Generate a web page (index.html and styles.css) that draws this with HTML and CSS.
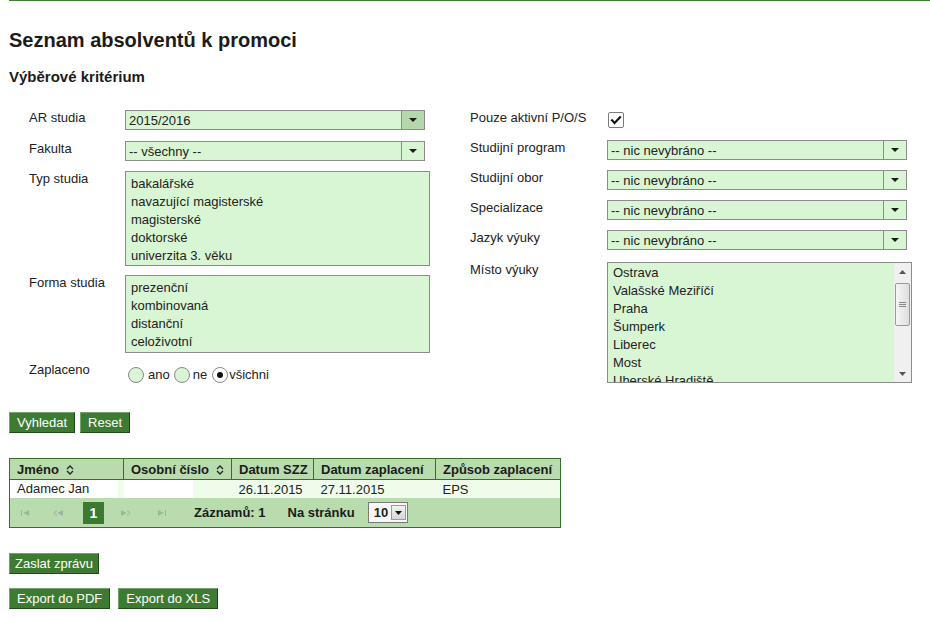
FILE: index.html
```html
<!DOCTYPE html>
<html lang="cs">
<head>
<meta charset="utf-8">
<title>Seznam absolventů k promoci</title>
<link rel="stylesheet" href="styles.css">
</head>
<body>
<div class="topline"></div>
<main class="page">
  <h1 class="title">Seznam absolventů k promoci</h1>
  <h2 class="subtitle">Výběrové kritérium</h2>

  <div class="criteria">
    <div class="col col-left">
      <div class="row">
        <span class="lbl">AR studia</span>
        <div class="select active"><span class="val">2015/2016</span><span class="arrow"></span></div>
      </div>
      <div class="row row-faculty">
        <span class="lbl">Fakulta</span>
        <div class="select"><span class="val">-- všechny --</span><span class="arrow"></span></div>
      </div>
      <div class="row">
        <span class="lbl">Typ studia</span>
        <div class="listbox lb-type">
          <div class="opt">bakalářské</div>
          <div class="opt">navazující magisterské</div>
          <div class="opt">magisterské</div>
          <div class="opt">doktorské</div>
          <div class="opt">univerzita 3. věku</div>
        </div>
      </div>
      <div class="row row-form">
        <span class="lbl">Forma studia</span>
        <div class="listbox lb-form">
          <div class="opt">prezenční</div>
          <div class="opt">kombinovaná</div>
          <div class="opt">distanční</div>
          <div class="opt">celoživotní</div>
        </div>
      </div>
      <div class="row row-paid">
        <span class="lbl">Zaplaceno</span>
        <div class="radios">
          <span class="radio r1"></span><span class="rtext t1">ano</span>
          <span class="radio r2"></span><span class="rtext t2">ne</span>
          <span class="radio r3 checked"></span><span class="rtext t3">všichni</span>
        </div>
      </div>
    </div>

    <div class="col col-right">
      <div class="row row-check">
        <span class="lbl">Pouze aktivní P/O/S</span>
        <span class="checkbox">
          <svg width="14" height="14" viewBox="0 0 14 14"><path d="M3 7.3 L5.6 10 L11 4.2" fill="none" stroke="#111" stroke-width="2.1" stroke-linecap="square"/></svg>
        </span>
      </div>
      <div class="row">
        <span class="lbl">Studijní program</span>
        <div class="select"><span class="val">-- nic nevybráno --</span><span class="arrow"></span></div>
      </div>
      <div class="row">
        <span class="lbl">Studijní obor</span>
        <div class="select"><span class="val">-- nic nevybráno --</span><span class="arrow"></span></div>
      </div>
      <div class="row">
        <span class="lbl">Specializace</span>
        <div class="select"><span class="val">-- nic nevybráno --</span><span class="arrow"></span></div>
      </div>
      <div class="row">
        <span class="lbl">Jazyk výuky</span>
        <div class="select"><span class="val">-- nic nevybráno --</span><span class="arrow"></span></div>
      </div>
      <div class="row row-place">
        <span class="lbl">Místo výuky</span>
        <div class="listbox scrolling">
          <div class="opts">
            <div class="opt">Ostrava</div>
            <div class="opt">Valašské Meziříčí</div>
            <div class="opt">Praha</div>
            <div class="opt">Šumperk</div>
            <div class="opt">Liberec</div>
            <div class="opt">Most</div>
            <div class="opt">Uherské Hradiště</div>
          </div>
          <div class="scrollbar">
            <span class="sb-btn"><svg width="7" height="4" viewBox="0 0 7 4"><path d="M0 4 L3.5 0 L7 4 Z" fill="#555"/></svg></span>
            <div class="sb-track">
              <div class="sb-thumb"><span class="grip"></span><span class="grip"></span><span class="grip"></span></div>
            </div>
            <span class="sb-btn"><svg width="7" height="4" viewBox="0 0 7 4"><path d="M0 0 L3.5 4 L7 0 Z" fill="#555"/></svg></span>
          </div>
        </div>
      </div>
    </div>
  </div>

  <div class="actions search-actions">
    <button class="btn">Vyhledat</button>
    <button class="btn">Reset</button>
  </div>

  <table class="grid">
    <colgroup>
      <col class="c1"><col class="c2"><col class="c3"><col class="c4"><col class="c5">
    </colgroup>
    <thead>
      <tr>
        <th>Jméno<svg class="sort" width="8" height="10" viewBox="0 0 8 10"><path d="M1 4 L4 1 L7 4 M1 6 L4 9 L7 6" fill="none" stroke="#222" stroke-width="1.3"/></svg></th>
        <th>Osobní číslo<svg class="sort" width="8" height="10" viewBox="0 0 8 10"><path d="M1 4 L4 1 L7 4 M1 6 L4 9 L7 6" fill="none" stroke="#222" stroke-width="1.3"/></svg></th>
        <th>Datum SZZ</th>
        <th>Datum zaplacení</th>
        <th>Způsob zaplacení</th>
      </tr>
    </thead>
    <tbody>
      <tr class="data">
        <td><div class="cell-white w1">Adamec Jan</div></td>
        <td><div class="cell-white w2"></div></td>
        <td class="txt">26.11.2015</td>
        <td class="txt">27.11.2015</td>
        <td class="txt">EPS</td>
      </tr>
      <tr class="pager-row">
        <td colspan="5">
          <div class="pager">
            <svg class="pg pg-first" width="8" height="6" viewBox="0 0 8 6"><path d="M0.5 0 V6" stroke="#9db39a" stroke-width="1"/><path d="M8 0 L2.5 3 L8 6 Z" fill="#9db39a"/></svg>
            <svg class="pg pg-prev" width="10" height="6" viewBox="0 0 10 6"><path d="M4 0.5 L0.8 3 L4 5.5" fill="none" stroke="#9db39a" stroke-width="1"/><path d="M10 0 L4.5 3 L10 6 Z" fill="#9db39a"/></svg>
            <span class="pg-cur">1</span>
            <svg class="pg pg-next" width="10" height="6" viewBox="0 0 10 6"><path d="M0 0 L5.5 3 L0 6 Z" fill="#9db39a"/><path d="M6 0.5 L9.2 3 L6 5.5" fill="none" stroke="#9db39a" stroke-width="1"/></svg>
            <svg class="pg pg-last" width="8" height="6" viewBox="0 0 8 6"><path d="M0 0 L5.5 3 L0 6 Z" fill="#9db39a"/><path d="M7.5 0 V6" stroke="#9db39a" stroke-width="1"/></svg>
            <span class="pg-text pg-count">Záznamů: 1</span>
            <span class="pg-text pg-per">Na stránku</span>
            <span class="mini-select"><span class="ms-val">10</span><span class="ms-btn"><svg width="7" height="4" viewBox="0 0 7 4"><path d="M0 0 L3.5 4 L7 0 Z" fill="#111"/></svg></span></span>
          </div>
        </td>
      </tr>
    </tbody>
  </table>

  <div class="actions msg-actions">
    <button class="btn btn-narrow">Zaslat zprávu</button>
  </div>
  <div class="actions export-actions">
    <button class="btn">Export do PDF</button>
    <button class="btn">Export do XLS</button>
  </div>
</main>
</body>
</html>
```

FILE: styles.css
```css
* { box-sizing: border-box; }
html, body { margin: 0; padding: 0; }
body {
  font-family: "Liberation Sans", Arial, sans-serif;
  font-size: 13px;
  color: #222;
  background: #fff;
  width: 930px;
  height: 622px;
  overflow: hidden;
}
.topline { height: 1px; margin-left: 9px; background: #3c7d2f; }
.page { padding-left: 9px; }

.title {
  margin: 27px 0 0;
  font-size: 20px;
  line-height: 24px;
  font-weight: bold;
  color: #1b1b1b;
}
.subtitle {
  margin: 16px 0 0;
  font-size: 15px;
  line-height: 18px;
  font-weight: bold;
  color: #1b1b1b;
}

.criteria { display: flex; margin-top: 24px; padding-left: 20px; }
.col { display: flex; flex-direction: column; gap: 10px; }
.col-left { width: 441px; }
.row { display: flex; align-items: flex-start; line-height: 16px; }
.col-left .lbl { width: 96px; flex: none; }
.col-right .lbl { width: 137px; flex: none; }
.row-faculty { margin-top: 1px; }
.row-form { margin-top: -1px; }
.row-paid { margin-top: -1px; }
.row-check { height: 20px; }
.row-place { margin-top: 2px; }

.select {
  width: 300px;
  height: 20px;
  border: 1px solid #8c8c8c;
  background: #d9f6d4;
  display: flex;
}
.select .val { flex: 1; padding: 1px 0 0 3px; line-height: 17px; white-space: nowrap; }
.select .arrow {
  width: 23px;
  border-left: 1px solid #8c8c8c;
  display: flex;
  align-items: center;
  justify-content: center;
}
.select .arrow::after {
  content: "";
  border-left: 4px solid transparent;
  border-right: 4px solid transparent;
  border-top: 4px solid #1a1a1a;
}
.select.active .arrow { background: #b5d8ab; }

.listbox {
  width: 305px;
  border: 1px solid #8c8c8c;
  background: #d9f6d4;
  padding: 2px 0 1px 5px;
}
.lb-type { padding: 3px 0 0 5px; }
.lb-form { padding: 3px 0 1px 5px; }
.opt { height: 18px; line-height: 18px; white-space: nowrap; }

.listbox.scrolling {
  height: 121px;
  display: flex;
  padding: 0;
}
.listbox.scrolling .opts { flex: 1; padding: 1px 0 0 5px; overflow: hidden; }
.scrollbar {
  width: 17px;
  display: flex;
  flex-direction: column;
  background: #f0f0f0;
}
.sb-btn { height: 17px; display: flex; align-items: center; justify-content: center; }
.sb-track { flex: 1; padding: 3px 1px 0; }
.sb-thumb {
  height: 43px;
  border: 1px solid #9a9a9a;
  border-radius: 2px;
  background: linear-gradient(to right, #f6f6f6, #dedede);
  display: flex;
  flex-direction: column;
  align-items: center;
  justify-content: center;
  gap: 1px;
}
.grip { width: 7px; height: 1px; background: #8a8a8a; }

.radios { display: flex; align-items: center; margin-top: 5px; }
.radio {
  width: 16px;
  height: 16px;
  border: 1px solid #8a8a8a;
  border-radius: 50%;
  background: #d9f6d4;
  display: flex;
  align-items: center;
  justify-content: center;
}
.radio.checked { background: #fff; }
.radio.checked::after {
  content: "";
  width: 6px;
  height: 6px;
  border-radius: 50%;
  background: #111;
}
.r1 { margin-left: 3px; }
.t1 { margin-left: 4px; }
.r2 { margin-left: 4px; }
.t2 { margin-left: 3px; }
.r3 { margin-left: 5px; }
.t3 { margin-left: 1px; }

.checkbox {
  width: 16px;
  height: 16px;
  margin: 2px 0 0 1px;
  border: 1px solid #7a7a7a;
  border-radius: 2px;
  background: #fff;
  display: flex;
  align-items: center;
  justify-content: center;
}

.actions { display: flex; gap: 5px; }
.search-actions { margin-top: 29px; }
.msg-actions { margin-top: 25px; }
.export-actions { margin-top: 14px; gap: 8px; }
.btn {
  font-family: "Liberation Sans", Arial, sans-serif;
  font-size: 13px;
  height: 21px;
  line-height: 19px;
  padding: 0 7px;
  color: #fff;
  background: #3e7b32;
  border: 1px solid;
  border-color: #74a36a #1f4a19 #1f4a19 #74a36a;
  border-radius: 0;
  margin: 0;
}
.btn-narrow { padding: 0 5px; }

.grid {
  margin-top: 25px;
  border-collapse: collapse;
  table-layout: fixed;
  width: 551px;
  border: 1px solid #34702a;
}
.c1 { width: 114px; }
.c2 { width: 108px; }
.c3 { width: 82px; }
.c4 { width: 122px; }
.c5 { width: 125px; }
.grid th {
  height: 21px;
  padding: 0 7px;
  text-align: left;
  font-weight: bold;
  white-space: nowrap;
  background: #b8dcae;
  border: 1px solid #34702a;
  color: #1b1b1b;
}
.sort { margin-left: 7px; vertical-align: -1px; }
.grid .data td {
  height: 18px;
  padding: 0;
  background: #effcec;
  white-space: nowrap;
}
.grid .data td.txt { padding-left: 7px; }
.cell-white { background: #fff; height: 18px; line-height: 18px; }
.w1 { width: 108px; padding-left: 7px; }
.w2 { width: 69px; }

.pager-row td { height: 29px; padding: 0; background: #b8dcae; }
.pager { display: flex; align-items: center; height: 29px; }
.pg { flex: none; }
.pg-first { margin-left: 11px; }
.pg-prev { margin-left: 24px; }
.pg-cur {
  margin-left: 20px;
  width: 21px;
  height: 22px;
  background: #3b7a30;
  color: #fff;
  font-weight: bold;
  font-size: 14px;
  line-height: 22px;
  text-align: center;
}
.pg-next { margin-left: 17px; }
.pg-last { margin-left: 27px; }
.pg-text { font-weight: bold; white-space: nowrap; color: #1b1b1b; }
.pg-count { margin-left: 28px; }
.pg-per { margin-left: 22px; }
.mini-select {
  margin-left: 13px;
  width: 40px;
  height: 21px;
  border: 1px solid #7a7a7a;
  background: #f7f7f7;
  display: flex;
  align-items: center;
  justify-content: space-between;
  padding: 0 1px 0 5px;
}
.ms-val { font-weight: bold; font-size: 13px; }
.ms-btn {
  width: 15px;
  height: 15px;
  border: 1px solid #9a9a9a;
  background: linear-gradient(#f2f2f2, #d6d6d6);
  display: flex;
  align-items: center;
  justify-content: center;
}
```
